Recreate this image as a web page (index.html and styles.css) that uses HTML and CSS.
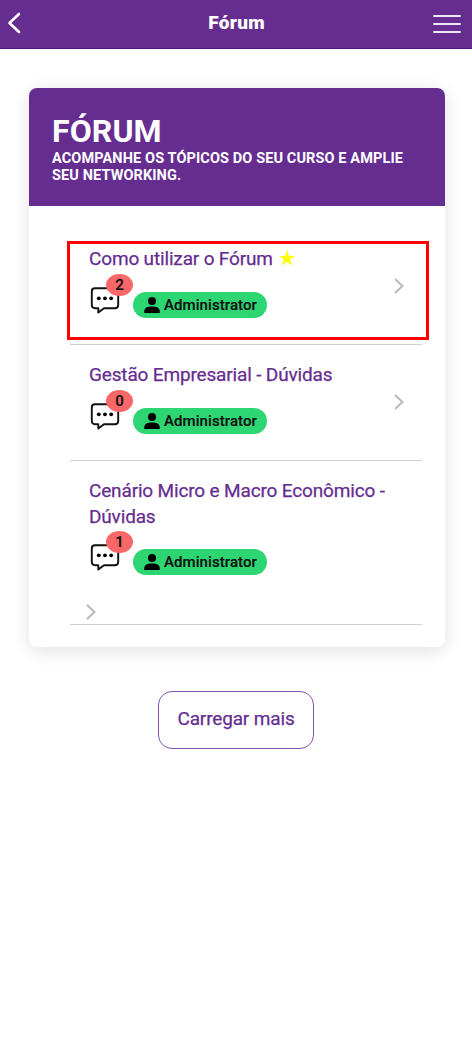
FILE: index.html
```html
<!DOCTYPE html>
<html lang="pt-BR">
<head>
<meta charset="utf-8">
<title>Fórum</title>
<link rel="stylesheet" href="styles.css">
</head>
<body>
<svg class="defs" width="0" height="0" aria-hidden="true">
  <symbol id="chat" viewBox="0 0 30 28">
    <path d="M5 2.200H25Q28.200 2.200 28.200 5.400V19Q28.200 22.200 25 22.200H14L8.300 26.600V22.200H5Q1.800 22.200 1.800 19V5.400Q1.800 2.200 5 2.200Z" fill="none" stroke="#111" stroke-width="1.900" stroke-linejoin="round"/>
    <circle cx="8.800" cy="12.300" r="1.900"/><circle cx="15" cy="12.300" r="1.900"/><circle cx="21.200" cy="12.300" r="1.900"/>
  </symbol>
  <symbol id="person" viewBox="0 0 16 16">
    <circle cx="8" cy="4" r="4"/>
    <path d="M.3 16V14.200C.3 11 3.800 9.600 8 9.600S15.700 11 15.700 14.200V16Z"/>
  </symbol>
  <symbol id="next" viewBox="0 0 10 16">
    <path d="M1 1L8.500 8L1 15" fill="none" stroke="#b9b9b9" stroke-width="2"/>
  </symbol>
</svg>
<header class="topbar">
  <svg class="back" viewBox="0 0 14 22"><path d="M12 2L2.500 11L12 20" fill="none" stroke="#fff" stroke-width="2.600" stroke-linecap="round" stroke-linejoin="round"/></svg>
  <h1 class="topbar-title">Fórum</h1>
  <div class="menu"><span></span><span></span><span></span></div>
</header>
<main class="page">
  <section class="card">
    <div class="card-head">
      <h2 class="card-title">FÓRUM</h2>
      <p class="card-sub">ACOMPANHE OS TÓPICOS DO SEU CURSO E AMPLIE<br>SEU NETWORKING.</p>
    </div>
    <div class="list">
      <article class="topic">
        <div class="topic-main">
          <h3 class="topic-title">Como utilizar o Fórum<svg class="star" viewBox="0 0 16 16"><path d="M8 0L9.900 5.900H16L11.100 9.500L13 15.500L8 11.800L3 15.500L4.900 9.500L0 5.900H6.100Z" fill="#ff0"/></svg></h3>
          <div class="meta"><div class="chat"><svg><use href="#chat"/></svg><span class="badge">2</span></div><div class="pill"><svg><use href="#person"/></svg><span>Administrator</span></div></div>
        </div>
        <svg class="next"><use href="#next"/></svg>
        <div class="highlight"></div>
      </article>
      <article class="topic">
        <div class="topic-main">
          <h3 class="topic-title">Gestão Empresarial - Dúvidas</h3>
          <div class="meta"><div class="chat"><svg><use href="#chat"/></svg><span class="badge">0</span></div><div class="pill"><svg><use href="#person"/></svg><span>Administrator</span></div></div>
        </div>
        <svg class="next"><use href="#next"/></svg>
      </article>
      <article class="topic tall">
        <div class="topic-main">
          <h3 class="topic-title">Cenário Micro e Macro Econômico -<br>Dúvidas</h3>
          <div class="meta"><div class="chat"><svg><use href="#chat"/></svg><span class="badge">1</span></div><div class="pill"><svg><use href="#person"/></svg><span>Administrator</span></div></div>
        </div>
        <svg class="next"><use href="#next"/></svg>
      </article>
    </div>
  </section>
  <button class="more">Carregar mais</button>
</main>
</body>
</html>
```
FILE: styles.css
```css
* { box-sizing: border-box; }
body { margin: 0; background: #fff; font-family: Roboto, sans-serif; color: #111; }
h1, h2, h3, p { margin: 0; }
svg { display: block; }
.defs { position: absolute; }
.topbar { height: 49px; background: #662d91; border-bottom: 1px solid #4f1580; display: flex; align-items: center; justify-content: space-between; padding: 0 11px 3px 7px; color: #fff; }
.back { width: 14px; height: 22px; margin-right: 14px; }
.topbar-title { font-size: 19px; line-height: 24px; font-weight: 900; letter-spacing: .3px; margin-left: 5px; }
.menu { width: 28px; height: 18px; display: flex; flex-direction: column; justify-content: space-between; margin-top: 2px; }
.menu span { height: 2px; border-radius: 1px; background: #eee8f3; }
.page { padding: 39px 27px 0 29px; display: flex; flex-direction: column; align-items: center; }
.card { width: 416px; height: 559px; border-radius: 8px; background: #fff; box-shadow: 0 4px 18px rgba(0, 0, 0, .12); }
.card-head { height: 118px; background: #662d91; border-radius: 8px 8px 0 0; padding: 24px 23px 0; color: #fff; }
.card-title { font-size: 32px; line-height: 38px; font-weight: 700; letter-spacing: .1px; }
.card-sub { margin-top: 1px; font-size: 14.500px; line-height: 16.500px; font-weight: 700; letter-spacing: .11px; white-space: nowrap; }
.list { padding: 23px 23px 0 41px; }
.topic { position: relative; height: 116px; border-bottom: 1px solid #cfcfcf; padding: 17px 18px 0 19px; display: flex; justify-content: space-between; }
.topic-title { display: flex; font-size: 19px; line-height: 26px; font-weight: 400; letter-spacing: -.16px; color: #662d91; white-space: nowrap; -webkit-text-stroke: .25px #662d91; }
.star { width: 16px; height: 16px; margin: 4px 0 0 6px; }
.meta { display: flex; align-items: flex-start; margin-top: 14px; }
.chat { position: relative; width: 44px; height: 29px; padding: 0 0 0 1px; }
.chat svg { width: 30px; height: 28px; }
.badge { position: absolute; left: 17px; top: -12px; width: 27px; height: 22px; border-radius: 50%; background: #f96868; font-size: 15px; line-height: 22px; font-weight: 500; text-align: center; -webkit-text-stroke: .2px #111; }
.pill { width: 134px; height: 26px; margin-top: 6px; border-radius: 13px; background: #2ed573; display: flex; align-items: center; padding: 0 0 1px 11px; gap: 4px; font-size: 15px; font-weight: 500; line-height: 24px; letter-spacing: .08px; -webkit-text-stroke: .2px #111; }
.pill svg { width: 16px; height: 16px; }
.next { width: 10px; height: 16px; margin-top: 32px; }
.tall { height: 164px; display: block; }
.tall .topic-title { display: block; }
.tall .meta { margin-top: 13px; }
.tall .next { margin: 29px 0 0 -3px; }
.highlight { position: absolute; left: -3px; top: 12px; width: 362px; height: 99px; border: 3px solid #f00; }
.more { margin: 44px 2px 0 0; width: 156px; height: 58px; border: 1px solid #8350a8; border-radius: 14px; background: #fff; color: #662d91; font: 400 19px/24px Roboto, sans-serif; letter-spacing: -.15px; padding: 0 0 3px; -webkit-text-stroke: .25px #662d91; }
```
